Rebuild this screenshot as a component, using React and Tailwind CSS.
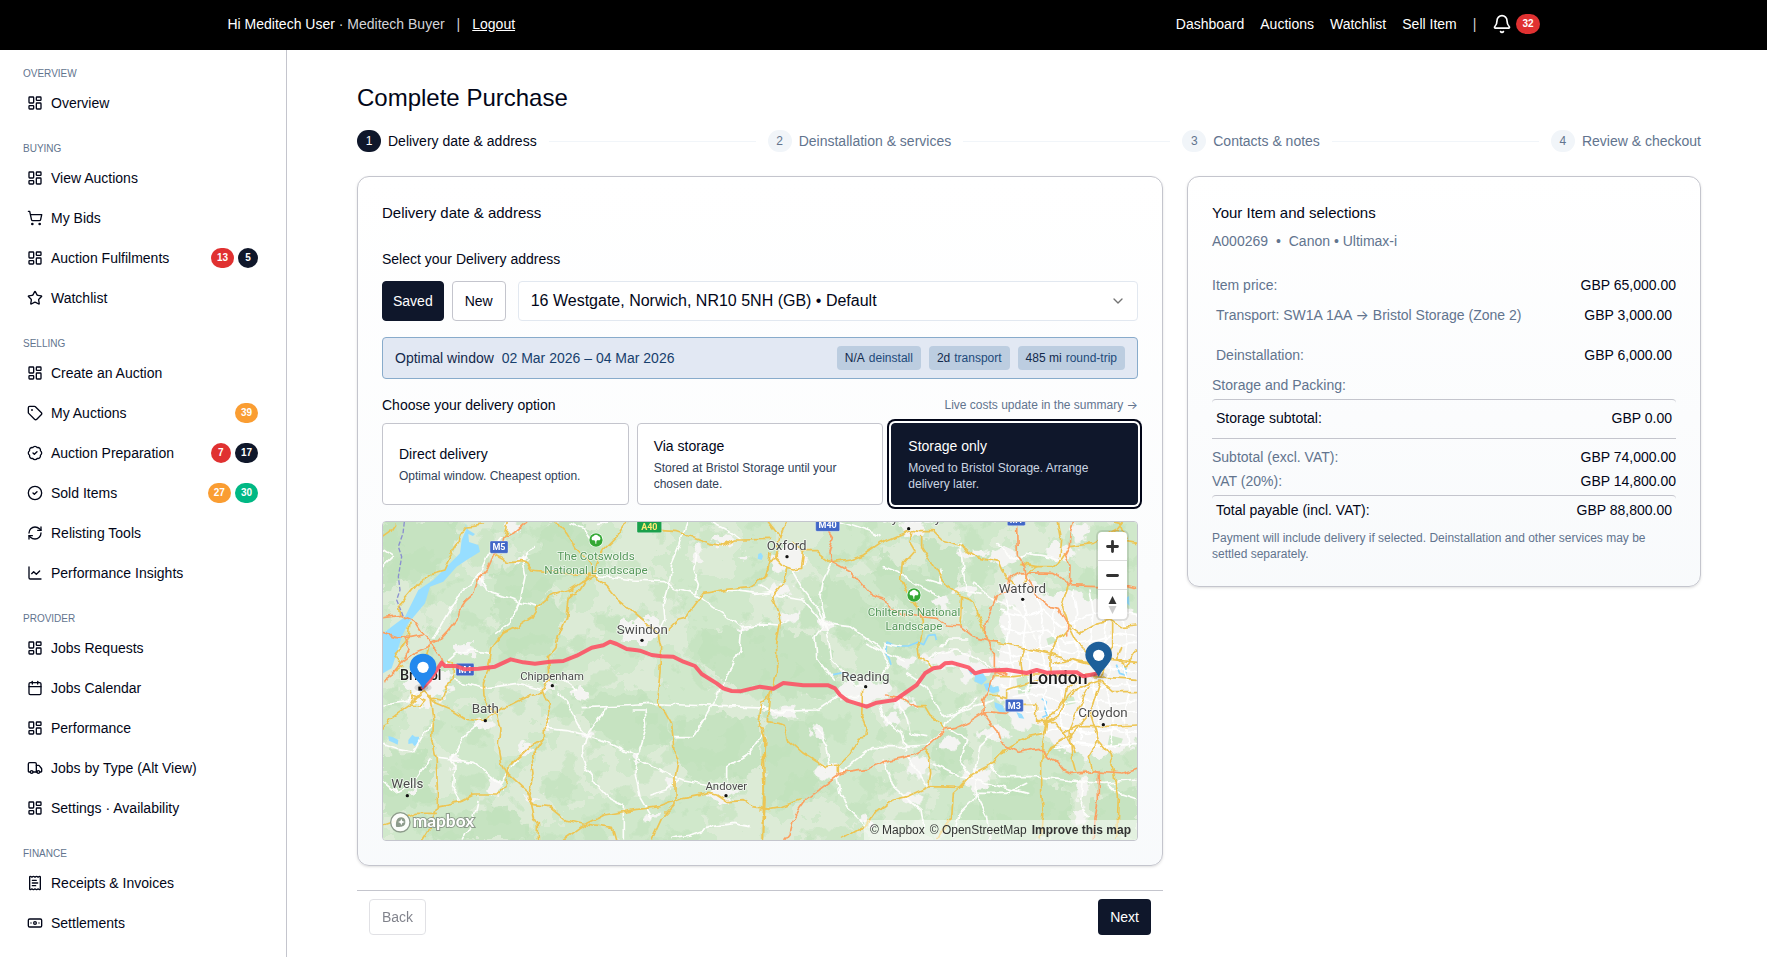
import React, { useState } from 'react';
import {
  BadgeCheck, Banknote, Bell, Calendar, ChartLine, ChevronDown, CircleCheck, LayoutDashboard,
  ReceiptText, RefreshCw, ShoppingCart, Star, Tag, Truck,
} from 'lucide-react';

const RED = 'bg-[#e03131]';
const DARK = 'bg-[#0f172a]';
const ORANGE = 'bg-[#fa9d32]';
const GREEN = 'bg-[#00b884]';

const sections = [
  { title: 'OVERVIEW', items: [{ label: 'Overview', icon: LayoutDashboard }] },
  {
    title: 'BUYING',
    items: [
      { label: 'View Auctions', icon: LayoutDashboard },
      { label: 'My Bids', icon: ShoppingCart },
      { label: 'Auction Fulfilments', icon: LayoutDashboard, badges: [[13, RED], [5, DARK]] },
      { label: 'Watchlist', icon: Star },
    ],
  },
  {
    title: 'SELLING',
    items: [
      { label: 'Create an Auction', icon: LayoutDashboard },
      { label: 'My Auctions', icon: Tag, badges: [[39, ORANGE]] },
      { label: 'Auction Preparation', icon: BadgeCheck, badges: [[7, RED], [17, DARK]] },
      { label: 'Sold Items', icon: CircleCheck, badges: [[27, ORANGE], [30, GREEN]] },
      { label: 'Relisting Tools', icon: RefreshCw },
      { label: 'Performance Insights', icon: ChartLine },
    ],
  },
  {
    title: 'PROVIDER',
    items: [
      { label: 'Jobs Requests', icon: LayoutDashboard },
      { label: 'Jobs Calendar', icon: Calendar },
      { label: 'Performance', icon: LayoutDashboard },
      { label: 'Jobs by Type (Alt View)', icon: Truck },
      { label: 'Settings · Availability', icon: LayoutDashboard },
    ],
  },
  {
    title: 'FINANCE',
    items: [
      { label: 'Receipts & Invoices', icon: ReceiptText },
      { label: 'Settlements', icon: Banknote },
    ],
  },
];

const steps = ['Delivery date & address', 'Deinstallation & services', 'Contacts & notes', 'Review & checkout'];

const options = [
  { id: 'direct', title: 'Direct delivery', text: 'Optimal window. Cheapest option.' },
  { id: 'via', title: 'Via storage', text: 'Stored at Bristol Storage until your chosen date.' },
  { id: 'storage', title: 'Storage only', text: 'Moved to Bristol Storage. Arrange delivery later.' },
];

const chips = [['N/A', 'deinstall'], ['2d', 'transport'], ['485 mi', 'round-trip']];

function Badge({ value, color }) {
  return (
    <span className={`flex h-5 min-w-5 items-center justify-center rounded-full px-1.5 text-[10px] font-bold text-white ${color}`}>
      {value}
    </span>
  );
}

function Arrow() {
  return <span className="font-['Inter',sans-serif]">→</span>;
}

function Header() {
  return (
    <header className="h-[50px] bg-black text-sm text-white">
      <div className="mx-auto flex h-12 max-w-[1312px] items-center justify-between">
        <div className="flex items-center">
          <span>Hi Meditech User</span>
          <span className="whitespace-pre text-zinc-300"> · Meditech Buyer</span>
          <span className="mx-3 text-zinc-300">|</span>
          <a href="#logout" className="underline">Logout</a>
        </div>
        <nav className="flex items-center gap-4">
          <a href="#dashboard">Dashboard</a>
          <a href="#auctions">Auctions</a>
          <a href="#watchlist">Watchlist</a>
          <a href="#sell">Sell Item</a>
          <span className="text-zinc-300">|</span>
          <a href="#notifications" aria-label="Notifications" className="flex items-center gap-1">
            <Bell className="h-5 w-5" />
            <Badge value={32} color={RED} />
          </a>
        </nav>
      </div>
    </header>
  );
}

function Sidebar() {
  return (
    <aside className="w-[287px] shrink-0 border-r border-[#c4c5cd] pt-3.5 pr-7 pl-[23px]">
      {sections.map((s, i) => (
        <div key={s.title} className={i > 0 ? 'mt-4' : ''}>
          <h2 className="text-[10px] leading-[19px] text-slate-500">{s.title}</h2>
          <ul>
            {s.items.map((it) => (
              <li key={it.label}>
                <a href="#nav" className="flex h-10 items-center gap-2 pl-1 text-sm">
                  <it.icon className="h-4 w-4" />
                  <span>{it.label}</span>
                  {it.badges && (
                    <span className="ml-auto flex gap-1">
                      {it.badges.map(([n, c]) => <Badge key={n} value={n} color={c} />)}
                    </span>
                  )}
                </a>
              </li>
            ))}
          </ul>
        </div>
      ))}
    </aside>
  );
}

function Stepper() {
  return (
    <ol className="mt-4 flex items-center text-sm">
      {steps.map((label, i) => (
        <li key={label} className="contents">
          <span
            className={`flex h-[22px] w-6 shrink-0 items-center justify-center rounded-full text-xs ${
              i === 0 ? 'bg-slate-900 text-white' : 'bg-slate-100 text-slate-500'
            }`}
          >
            {i + 1}
          </span>
          <span className={`ml-[7px] whitespace-nowrap leading-[22px] ${i === 0 ? '' : 'text-slate-500'}`}>{label}</span>
          {i < steps.length - 1 && <span className="mx-3 h-px flex-1 bg-slate-100" />}
        </li>
      ))}
    </ol>
  );
}

/* ---- map ---- */

const west = {
  orange: [
    '530,396 490,430 462,440 455,470 430,495 410,540 385,570 372,610 345,635 325,665 318,690 290,725 262,755 240,768 200,785 160,815 130,850 99,872',
    '99,683 150,676 200,700 222,735 245,760 270,800 280,825',
    '99,727 140,740 180,742 215,735',
    '160,740 178,775 165,805',
  ],
  yellow: [
    '99,440 120,425 137,400',
    '400,402 370,406 350,408 328,440 325,460 300,500 282,540 245,550 205,580 145,650 150,676',
    '475,396 468,430 462,440',
    '437,495 475,515 515,512 530,518 545,540 590,545 700,550 735,557',
    '615,396 650,430 680,480 720,520 735,557 775,590 800,622 845,660 880,690 925,735 932,770 930,850 920,930 945,965 965,1000 972,1080 985,1110 975,1160 975,1245 935,1285 905,1350',
    '828,396 800,440 760,480 740,520 735,557',
    '720,552 690,600 660,612 650,680 625,740 618,770 595,800 600,860 580,900 595,940 597,975 583,1010 583,1045 545,1100 552,1150 540,1200 535,1225 545,1245 553,1280 565,1300 565,1350',
    '735,557 690,580 660,600 600,620 560,655 545,680 500,710 460,730 425,775 420,810 400,880 402,920 440,975 450,1020 445,1060 455,1120 470,1150 530,1205 545,1243',
    '935,422 980,425 1040,445 1080,460 1120,468 1150,450 1170,450 1260,448',
    '955,720 985,690 1005,685 1030,650 1060,610 1130,598 1200,590 1245,560 1255,530 1260,490',
    '220,905 250,935 310,960 350,985 400,990 440,965 490,940 540,915 580,903',
    '240,920 250,1000 248,1050 258,1100 262,1190 262,1250 240,1310 215,1350',
    '99,1020 120,985 140,970 185,940 220,905',
    '262,1248 330,1235 370,1215 440,1215 465,1190 475,1130 540,1070 583,1045',
    '545,1243 600,1250 650,1290 710,1305 790,1315 800,1350',
    '640,1350 710,1300 760,1275 860,1258 930,1250 1000,1225 1080,1210 1100,1215 1130,1235 1180,1232 1210,1250 1260,1258',
    '1240,1350 1240,1250 1245,1150 1240,1020 1225,1010 1235,940 1260,920',
    '99,1305 160,1285 200,1270 262,1270',
    '245,925 275,930 290,890 310,870 310,820 290,815',
    '180,905 190,925 180,945 210,948 225,930 190,915',
    '180,700 175,740 150,780 135,800 150,820 140,845 160,830',
    '240,768 230,800 200,830',
  ],
  white: [
    '660,400 700,415 720,445 740,455',
    '1010,400 990,460 965,520 960,570 940,640 945,690 925,730',
    '735,557 850,570 940,575 970,595 1030,610 1060,630 1120,670 1170,710 1260,700',
    '1175,710 1170,780 1110,900 1090,940 1060,990 1030,1040 975,1040',
    '390,555 410,600 510,635 570,650',
    '550,470 515,512 525,560 510,635 480,700 440,730',
    '700,950 820,945 900,940 1000,945 1130,950 1260,955',
    '710,1035 780,1060 860,1100 950,1150 1000,1170 1080,1185 1130,1180 1130,1130 1200,1090 1240,1030',
    '710,1035 695,1100 710,1140 740,1185 780,1230 820,1250 820,1350',
    '583,1015 650,1022 710,1035 750,980 770,950',
    '860,1100 855,1150 870,1220 905,1280',
    '630,910 660,960 680,1000 710,1035',
    '99,945 170,935 200,905 230,890',
    '280,825 320,790 360,780 420,790',
    '310,870 400,895 500,880 580,900',
    '395,1000 350,1030 330,1060 300,1110 315,1130 310,1200 330,1235',
    '99,1060 140,1075 190,1085 220,1030 250,1000',
    '265,1105 300,1110 370,1120 450,1180 520,1085',
    '1040,490 1030,545 1045,580 1040,610',
    '850,960 885,960 890,1010 875,1060 860,1100',
    '455,440 415,490 385,560 330,610 290,680 250,750',
    '99,480 130,500 99,530',
    '740,400 780,396',
    '1170,450 1130,420 1090,400',
    '1130,600 1180,605 1220,610 1260,605',
    '680,900 640,870 600,850',
    '960,1345 1020,1335 1090,1310 1150,1300 1200,1310',
    '340,1350 370,1290 385,1230',
    '99,1170 140,1205 190,1180 240,1110',
    '985,1170 950,1200 900,1215',
  ],
};

const east = {
  orange: [
    '200,80 220,110 207,160 213,185 270,215 300,250 330,285 375,300 385,325 400,330 440,345 530,355 560,375 600,378 640,410 690,425 715,425',
    '670,640 668,600 690,560 703,520 703,460 675,410 680,360 690,340 710,285 745,270 750,235 780,218 880,220 905,235 925,257 1010,260 1060,252 1131,266',
    '770,80 772,165 795,200 800,240 830,285 870,320 895,325 920,370 920,405',
    '940,66 930,100 928,140 915,165 930,200 928,257',
    '670,640 710,690 720,730 775,757 840,745 860,770 890,785 910,810 930,820 1000,815 1090,822 1131,808',
    '740,640 680,635 640,660 590,685 555,690 495,745 460,765 370,785 320,808 240,820 200,850 140,895 115,930 100,960 90,1000 75,1018',
    '1000,812 1015,820 1015,900 1005,960 1000,1018',
    '380,585 430,595 455,612 475,620',
    '703,515 740,518 740,525 703,520',
  ],
  yellow: [
    '220,188 270,180 310,165 360,130 430,100 450,90 480,95 520,95 545,120 600,135 650,170 715,185 725,210 745,240 760,250',
    '455,95 450,125 465,150 430,190 425,240 440,275 470,320 490,360 488,400 470,440 475,470 520,500',
    '485,110 485,140 530,210 560,255 605,290 640,305 665,370 680,420 800,445 880,465 930,480 1000,500',
    '100,125 130,155 170,155 213,188',
    '45,170 80,205 100,210 125,205 130,155',
    '80,205 75,240 35,290 50,330 62,365 50,430 50,520 30,600 25,665 75,675 85,720 130,760 195,800 235,795 235,820',
    '235,795 270,760 295,715 315,710 318,680 305,650 308,570',
    '0,240 20,225 25,195 45,170 60,110 25,66',
    '60,110 80,66',
    '0,685 15,720 8,800 15,900 10,1018',
    '0,930 60,920 118,900',
    '245,1018 320,975 340,945 400,900 440,890 505,860 600,862 640,820 700,790 740,745 800,710 850,700 860,660 910,600 940,570 1000,545',
    '505,860 512,820 508,770 495,745',
    '475,620 495,620 510,645 545,670 552,690',
    '530,1018 575,950 580,880 600,862',
    '605,290 600,375',
    '690,580 740,595 740,570 800,550 840,535',
    '705,530 760,530 800,525 900,525 1000,530 1131,538',
    '790,445 780,490 785,530',
    '780,190 830,200 880,200 905,180 915,165',
    '930,140 1000,130 1070,90 1090,66',
    '1131,130 1100,125 1080,70 1060,66',
    '830,200 800,220 795,250',
    '895,66 905,120 900,170',
    '925,257 905,320 925,380 945,420 975,450 1000,500',
    '920,370 960,400 1010,370 1050,360 1080,380 1131,375',
    '870,520 870,470 885,430 925,385',
    '880,490 930,480 980,490 1040,480 1131,490',
    '1020,530 1040,470 1055,440 1055,370',
    '1085,440 1070,480 1100,500 1131,450',
    '1020,545 1005,590 990,640 1015,720 1050,760 1060,815 1075,890 1070,1018',
    '990,560 960,620 930,690 935,760 950,815',
    '830,610 830,665 880,665 930,720 945,760',
    '860,670 850,720 845,790 845,880 850,930 840,1018',
    '910,700 950,680 1020,680 1131,675',
    '930,590 960,560 1020,540 1060,575 1131,575',
    '780,610 830,610',
    '1015,720 985,770 995,812',
    '860,670 900,640 915,570 950,545',
    '850,775 870,740 940,700 990,640',
  ],
  white: [
    '0,255 60,290 130,300 190,370 270,380 340,430 380,460 430,480',
    '95,210 130,270 170,320 195,370 205,410 215,480 270,540 310,560',
    '0,370 60,375 90,360',
    '240,66 340,100 360,110',
    '370,200 420,220 500,270 540,290',
    '505,240 540,250 540,210',
    '600,130 610,215 620,270 660,280',
    '0,620 50,635 170,630 230,590 300,590',
    '170,680 200,740 210,800',
    '230,825 240,880 270,930 320,980',
    '240,820 340,740 420,740 500,735 555,690 570,650 650,600',
    '360,620 380,670 430,700 440,750',
    '410,600 440,650 450,700 500,710',
    '320,430 370,460 390,500 350,540',
    '375,455 375,430 420,440',
    '440,520 500,560 530,610 550,650 610,630 700,600',
    '370,780 400,860 440,895 480,930 490,990',
    '520,790 600,830 650,840 720,860 800,880',
    '640,830 660,740 700,700',
    '650,840 640,900 600,940 580,1018',
    '645,880 680,950 690,1018',
    '440,765 470,810 505,860',
    '570,690 620,720 600,790 640,830',
    '690,790 720,830 830,830 950,845 1030,850 1131,840',
    '970,840 960,920 990,950',
    '800,850 740,880 640,880',
    '1040,850 1070,880 1131,900',
    '700,510 660,480 590,450 530,460 500,480',
    '620,420 560,420 540,440',
    '710,130 760,180 800,160 870,170 905,180',
    '640,250 700,300 760,320 800,360 830,420',
    '195,370 165,410 170,470 220,540',
    '213,188 190,240 180,290 195,360',
  ],
};

// dense street grid of greater London
const streets = [
  '720,330 790,350 850,330 905,380 980,350 1060,330 1131,345',
  '720,380 780,400 860,390 920,430 1000,420 1080,400 1131,410',
  '720,450 770,470 860,440 940,460 1010,440 1131,430',
  '720,490 800,480 880,500 960,490 1040,500 1131,515',
  '720,560 790,570 870,555 940,570 1040,560 1131,555',
  '760,590 840,580 900,610 980,600 1060,610 1131,600',
  '800,640 880,630 950,650 1040,640 1131,635',
  '840,700 900,680 980,700 1060,690 1131,700',
  '880,740 960,730 1050,740 1131,730',
  '740,300 750,360 740,430 760,500 750,580',
  '780,270 800,340 790,420 810,490 800,580 820,620',
  '830,290 850,360 840,440 860,500 850,590 870,660',
  '880,330 885,400 900,460 895,540 910,600 900,690',
  '940,270 950,340 940,410 960,470 950,540 970,620 960,720',
  '990,270 1000,340 990,420 1010,480 1000,560 1020,640 1010,720',
  '1040,360 1030,430 1050,500 1040,580 1060,650 1050,740',
  '1090,360 1100,430 1090,500 1110,570 1090,650 1110,740',
];

const greens = [
  '600,396 720,396 740,540 640,560 560,640 440,710 430,560 560,480',
  '430,720 600,610 640,680 600,800 470,790 420,760',
  '99,1090 230,1090 250,1230 99,1280',
  '700,930 860,900 940,950 960,1060 820,1080 720,1010',
  '960,990 1230,970 1230,1150 1020,1180 970,1080',
  '1050,720 1290,700 1290,900 1160,900 1060,820',
  '260,1280 480,1250 560,1350 230,1350',
  '99,396 330,396 300,500 200,570 99,600',
  '1240,930 1300,980 1420,1010 1390,1220 1240,1250',
];

const eastGreens = [
  '200,220 330,300 420,340 520,390 460,450 380,440 230,400 190,330',
  '360,150 420,200 600,250 530,350 440,320 340,260',
  '470,110 600,150 600,260 520,240',
  '0,400 180,400 230,520 220,590 20,590',
  '30,690 180,780 200,810 80,850 20,850',
  '650,850 840,830 930,880 930,1010 660,1018',
  '520,690 600,680 640,760 600,830 520,800',
  '990,900 1131,860 1131,1018 1020,1018',
];

// [x, y, rx, ry]
const westTowns = [
  [235, 880, 68, 52], [210, 930, 38, 24], [400, 1000, 26, 18], [870, 722, 62, 38], [350, 780, 38, 16],
  [600, 885, 22, 12], [690, 910, 20, 20], [712, 1030, 20, 12], [530, 1075, 18, 18], [312, 1115, 26, 14],
  [440, 1188, 20, 18], [515, 512, 22, 12], [485, 410, 22, 20], [1125, 455, 32, 16], [1042, 490, 18, 18],
  [1175, 712, 18, 8], [1120, 1215, 42, 20], [860, 1105, 12, 10], [905, 1280, 20, 12], [960, 1180, 12, 14],
  [545, 1225, 26, 10], [398, 570, 14, 16], [590, 1010, 14, 16], [195, 1190, 12, 10], [1180, 510, 18, 8],
];

const eastTowns = [
  [85, 175, 52, 42], [60, 270, 38, 18], [85, 355, 28, 18], [310, 570, 76, 36], [60, 635, 50, 12],
  [460, 85, 36, 26], [170, 690, 20, 16], [210, 815, 42, 22], [635, 165, 42, 14], [620, 270, 28, 18],
  [540, 305, 24, 18], [730, 170, 40, 26], [780, 270, 62, 46], [900, 160, 40, 24], [960, 100, 26, 30],
  [560, 480, 80, 22], [640, 510, 46, 26], [440, 490, 26, 18], [480, 800, 26, 32], [450, 895, 30, 16],
  [650, 840, 40, 30], [570, 730, 30, 20], [700, 700, 44, 20], [430, 610, 40, 18], [970, 860, 26, 30],
  [1000, 600, 180, 170], [870, 500, 170, 140], [900, 380, 180, 100], [1060, 420, 110, 110], [760, 560, 60, 60],
  [960, 950, 18, 26], [190, 370, 16, 18], [320, 965, 18, 12], [810, 650, 60, 40], [395, 655, 30, 16],
];

// [label, x, y, size, fill, dot]
const labels = [
  ['The Cotswolds', 639, 113, 35, '#56985a'],
  ['National Landscape', 639, 157, 35, '#56985a'],
  ['Swindon', 778, 336, 40, '#4b4b4b', [777, 355]],
  ['Chippenham', 507, 474, 34, '#4b4b4b', [508, 491]],
  ['Bath', 307, 574, 40, '#4b4b4b', [307, 596]],
  ['Wells', 73, 799, 40, '#4b4b4b', [73, 821]],
  ['Andover', 1030, 804, 34, '#4b4b4b', [1029, 821]],
  ['Oxford', 1211, 84, 40, '#4b4b4b', [1212, 104]],
  ['Aylesbury', 1588, -1, 40, '#4b4b4b', [1577, 20]],
  ['Watford', 1918, 212, 40, '#4b4b4b', [1919, 232]],
  ['Reading', 1447, 476, 40, '#4b4b4b', [1448, 494]],
  ['Croydon', 2160, 586, 40, '#4b4b4b', [2161, 608]],
  ['Chilterns National', 1593, 281, 35, '#56985a'],
  ['Landscape', 1593, 325, 35, '#56985a'],
];

// [label, x, y, width, fill, text fill]
const shields = [
  ['M5', 321, 57, 54, '#4167c7', '#fff'],
  ['A40', 762, -5, 74, '#1aa04b', '#ffe873'],
  ['M4', 219, 424, 54, '#4167c7', '#fff'],
  ['M40', 1298, -9, 72, '#4167c7', '#fff'],
  ['M1', 1873, -26, 54, '#4167c7', '#fff'],
  ['M3', 1867, 532, 54, '#4167c7', '#fff'],
];

const Lines = ({ list, stroke, width }) => (
  <g fill="none" stroke={stroke} strokeWidth={width} strokeLinejoin="round" strokeLinecap="round">
    {list.map((p) => <polyline key={p} points={p} />)}
  </g>
);

const Towns = ({ list }) => list.map(([x, y, rx, ry]) => <ellipse key={`${x}-${y}`} cx={x} cy={y} rx={rx} ry={ry} />);

const Pin = ({ x, y, fill }) => (
  <g transform={`translate(${x} ${y})`}>
    <ellipse cx="0" cy="-4" rx="26" ry="12" fill="#000" opacity="0.1" />
    <ellipse cx="0" cy="-4" rx="16" ry="7" fill="#000" opacity="0.14" />
    <path d="M0 0C-10-24-40-42-40-66A40 40 0 0 1 40-66C40-42 10-24 0 0Z" fill={fill} />
    <circle cx="0" cy="-65" r="17" fill="#fff" />
  </g>
);

const Park = ({ x, y }) => (
  <g transform={`translate(${x} ${y})`}>
    <circle r="22" fill="#fff" />
    <circle r="20" fill="#35a835" />
    <path d="M-11 1a7 7 0 0 1 3-12 9 9 0 0 1 16 0 7 7 0 0 1 3 12h-8l-2 4v6h-3V5l-3-4z" fill="#fff" />
  </g>
);

function RouteMap() {
  return (
    <svg
      viewBox="0 0 2262 954"
      preserveAspectRatio="xMidYMid slice"
      role="img"
      aria-label="Route map"
      className="h-full w-full font-['Roboto',sans-serif]"
    >
      <defs>
        <filter id="wood" x="0" y="0" width="100%" height="100%" colorInterpolationFilters="sRGB">
          <feTurbulence type="fractalNoise" baseFrequency="0.012" numOctaves="4" seed="11" />
          <feColorMatrix values="0 0 0 0 0.74  0 0 0 0 0.88  0 0 0 0 0.72  9 0 0 0 -4.9" />
          <feComponentTransfer><feFuncA type="discrete" tableValues="0 0.28 0.5" /></feComponentTransfer>
        </filter>
        <filter id="field" x="0" y="0" width="100%" height="100%" colorInterpolationFilters="sRGB">
          <feTurbulence type="fractalNoise" baseFrequency="0.006" numOctaves="5" seed="4" />
          <feColorMatrix values="0 0 0 0 0.865  0 0 0 0 0.92  0 0 0 0 0.845  0 9 0 0 -4.1" />
          <feComponentTransfer><feFuncA type="discrete" tableValues="0 0.9" /></feComponentTransfer>
        </filter>
        <filter id="rough" x="-5%" y="-5%" width="110%" height="110%">
          <feTurbulence type="fractalNoise" baseFrequency="0.03" numOctaves="3" seed="7" />
          <feDisplacementMap in="SourceGraphic" scale="60" xChannelSelector="R" yChannelSelector="G" />
        </filter>
        <filter id="wobble" x="-5%" y="-5%" width="110%" height="110%">
          <feTurbulence type="fractalNoise" baseFrequency="0.03" numOctaves="2" seed="3" />
          <feDisplacementMap in="SourceGraphic" scale="20" xChannelSelector="R" yChannelSelector="G" />
        </filter>
      </defs>

      <rect width="2262" height="954" fill="#d0e8cb" />
      <rect width="2262" height="954" filter="url(#field)" />
      <g fill="#c6e3c1" filter="url(#rough)">
        <g transform="translate(-99 -396)">{greens.map((p) => <polygon key={p} points={p} />)}</g>
        <g transform="translate(1131 -66)">{eastGreens.map((p) => <polygon key={p} points={p} />)}</g>
      </g>
      <rect width="2262" height="954" filter="url(#wood)" />
      <g fill="#f4f4f2" filter="url(#rough)">
        <g transform="translate(-99 -396)"><Towns list={westTowns} /></g>
        <g transform="translate(1131 -66)"><Towns list={eastTowns} /></g>
      </g>
      <g fill="#cfe8ca">
        <path d="M1900 470l30-10 20 20-10 30-34 6zM2046 520l26 4 6 20-30 6zM1990 350l26-10 10 16-30 14zM2180 640l40 10-10 26-36-8zM1850 350l20-6 6 16-22 8z" />
      </g>

      {/* water */}
      <g fill="#97deff">
        <path d="M0 334L66 284 106 204 151 174 191 134 231 94 236 54 250 22 246 4 256 24 276 36 270 42 256 36 258 60 286 69 291 89 251 114 221 134 181 179 141 194 126 244 76 304 56 344 41 394 26 439 0 454Z" />
        <path d="M16 642l14 4 16 8-2 14-12-6-14-6zM76 654l12-16 8 6 12 0 0 22-14 6-6-8-12 2zM1126 96l8-4 6 10-4 12-12-4z" />
        <path d="M1776 460l24-6 12 18-16 16-22-10zM1802 486l18-4 10 14 16-4 4 16-20 6-20-8zM1834 540l24 10 10 22-14 4-18-20zM1900 570l16 6 8 14-16-2zM2218 430l12 4 2 20-8 4zM2232 226l6-4 2 30-8-8z" />
        <path d="M1756 444l16-4 4 10-12 8z" />
      </g>
      <g fill="none" stroke="#8ed9ff" strokeWidth="5" strokeLinejoin="round">
        <path d="M1508 392l4-32 24 12 40 0 30-12 16 8 14-28 20-2 4 16M1524 428l-6-20-10-14M1976 530l14 10-4 20 6 20-14 6M1350 458l30-6 30 14M2200 428l10 26 20 6" />
      </g>
      <polyline points="64,0 60,34 46,74 56,104 46,164 51,204 41,234 61,284" fill="none" stroke="#8a8fd0" strokeWidth="4" strokeDasharray="14 6" />

      <g filter="url(#wobble)">
        <g transform="translate(-99 -396)">
          <Lines list={west.white} stroke="#fdfdfb" width="5" />
        </g>
        <g transform="translate(1131 -66)">
          <Lines list={east.white} stroke="#fdfdfb" width="5" />
          <Lines list={streets} stroke="#fff" width="5" />
        </g>
        <g transform="translate(-99 -396)">
          <Lines list={west.yellow} stroke="#edc552" width="5" />
          <Lines list={west.orange} stroke="#fba162" width="5" />
        </g>
        <g transform="translate(1131 -66)">
          <Lines list={east.yellow} stroke="#edc552" width="5" />
          <Lines list={east.orange} stroke="#fba162" width="5" />
        </g>
      </g>

      <Park x={639} y={54} />
      <Park x={1593} y={219} />

      <g textAnchor="middle" stroke="#fff" strokeWidth="5" strokeOpacity="0.7" strokeLinejoin="round" paintOrder="stroke">
        {labels.map(([t, x, y, size, fill]) => (
          <text key={t} x={x} y={y} fontSize={size} fill={fill}>{t}</text>
        ))}
        <text x="113" y="475" fontSize="43" fill="#222" fontWeight="500">Bristol</text>
        <text x="2025" y="485" fontSize="53" fill="#1c1c1c" fontWeight="500">London</text>
      </g>
      {labels.filter((l) => l[5]).map(([t, , , , , dot]) => <circle key={t} cx={dot[0]} cy={dot[1]} r="5" fill="#111" />)}
      <rect x="106" y="494" width="12" height="12" fill="#111" />

      {shields.map(([t, x, y, w, fill, color]) => (
        <g key={t}>
          <rect x={x} y={y} width={w} height="37" rx="4" fill={fill} stroke="#fff" strokeOpacity="0.5" strokeWidth="2" />
          <text x={x + w / 2} y={y + 28} fontSize="27" fontWeight="700" fill={color} textAnchor="middle">{t}</text>
        </g>
      ))}

      <polyline
        points="119,497 141,474 176,422 186,432 219,432 246,442 286,440 336,434 383,412 421,421 456,425 501,419 541,417 581,401 626,377 661,370 681,359 701,366 731,381 771,386 806,399 836,403 871,404 901,419 936,432 956,456 1001,484 1021,499 1046,507 1071,508 1131,494 1171,500 1201,483 1261,490 1336,490 1356,499 1371,519 1393,536 1451,554 1481,542 1536,534 1601,489 1626,454 1651,439 1671,436 1686,424 1706,422 1756,436 1776,454 1801,447 1871,443 1931,453 1961,444 1991,452 2031,451 2081,451 2101,463 2146,454"
        fill="none"
        stroke="#fb5566"
        strokeOpacity="0.92"
        strokeWidth="12"
        strokeLinejoin="round"
        strokeLinecap="round"
      />
      <Pin x={120} y={501} fill="#2489ee" />
      <Pin x={2147} y={465} fill="#1e5f9a" />

      {/* mapbox wordmark */}
      <g transform="translate(52 901)">
        <circle r="29" fill="#fff" fillOpacity="0.9" stroke="#8d9b8b" strokeWidth="4" />
        <path d="M-13 13C-14 0-12-15 3-15A14 14 0 0 1 15 0C15 14 0 15-13 13Z" fill="#8d9b8b" />
        <path d="M3-11L6-4 13-1 6 2 3 9 0 2-7-1 0-4Z" fill="#fff" />
        <text x="37" y="14" fontSize="52" fontWeight="700" fill="#fff" stroke="#8d9b8b" strokeWidth="6" paintOrder="stroke" fontFamily="Lato, sans-serif">mapbox</text>
      </g>
    </svg>
  );
}

function MapPanel() {
  return (
    <div className="relative mt-4 h-80 overflow-hidden rounded border border-[#c4c5cd]">
      <RouteMap />
      <div className="absolute top-2.5 right-2.5 w-[29px] divide-y divide-[#ddd] rounded bg-white ring-2 ring-black/10">
        <button aria-label="Zoom in" className="flex h-[29px] w-full items-center justify-center">
          <svg viewBox="0 0 29 29" className="h-[29px] w-[29px]"><path d="M14.5 9.5v10M9.5 14.5h10" stroke="#333" strokeWidth="2.8" strokeLinecap="round" /></svg>
        </button>
        <button aria-label="Zoom out" className="flex h-[29px] w-full items-center justify-center">
          <svg viewBox="0 0 29 29" className="h-[29px] w-[29px]"><path d="M9.5 14.5h10" stroke="#333" strokeWidth="2.8" strokeLinecap="round" /></svg>
        </button>
        <button aria-label="Reset bearing to north" className="flex h-[29px] w-full items-center justify-center">
          <svg viewBox="0 0 29 29" className="h-[29px] w-[29px]">
            <path d="M10.5 14l4-8 4 8z" fill="#333" />
            <path d="M10.5 16l4 8 4-8z" fill="#ccc" />
          </svg>
        </button>
      </div>
      <div className="absolute right-0 bottom-0 flex h-5 items-center gap-[5px] bg-white/50 px-1.5 text-xs text-[#333]">
        <a href="#mapbox">© Mapbox</a>
        <a href="#osm">© OpenStreetMap</a>
        <a href="#improve" className="font-bold">Improve this map</a>
      </div>
    </div>
  );
}

function DeliveryCard() {
  const [mode, setMode] = useState('saved');
  const [option, setOption] = useState('storage');

  return (
    <section className="rounded-xl border border-[#c4c5cd] bg-linear-to-b from-white to-slate-50 p-6 shadow-sm">
      <h2 className="text-[15px] leading-6">Delivery date &amp; address</h2>

      <label htmlFor="address" className="mt-6 block text-sm">Select your Delivery address</label>
      <div className="mt-3 flex">
        <button
          onClick={() => setMode('saved')}
          className={`h-10 rounded border px-2.5 text-sm ${mode === 'saved' ? 'border-slate-900 bg-slate-900 text-white' : 'border-[#c4c5cd] bg-white'}`}
        >
          Saved
        </button>
        <button
          onClick={() => setMode('new')}
          className={`ml-2 h-10 rounded border px-3 text-sm ${mode === 'new' ? 'border-slate-900 bg-slate-900 text-white' : 'border-[#c4c5cd] bg-white'}`}
        >
          New
        </button>
        <div className="relative ml-3 flex-1">
          <select id="address" className="h-10 w-full appearance-none rounded border border-slate-200 bg-white px-3 text-base">
            <option>16 Westgate, Norwich, NR10 5NH (GB) • Default</option>
          </select>
          <ChevronDown className="pointer-events-none absolute top-3 right-3 h-4 w-4 text-neutral-500" />
        </div>
      </div>

      <div className="mt-4 flex h-[42px] items-center justify-between rounded border border-[#88abcb] bg-[#e2e8f3] px-3 text-sm">
        <p className="text-[#12294b]">
          Optimal window <span className="ml-1 text-[#173f6d]">02 Mar 2026 – 04 Mar 2026</span>
        </p>
        <ul className="flex gap-2 text-xs">
          {chips.map(([value, label]) => (
            <li key={label} className="flex gap-1 rounded bg-[#bccde0] px-2 py-1 text-[#1c4a7a]">
              <span className="text-[#12294b]">{value}</span>
              <span>{label}</span>
            </li>
          ))}
        </ul>
      </div>

      <div className="mt-4 flex items-center justify-between">
        <h3 className="text-sm">Choose your delivery option</h3>
        <span className="text-xs text-slate-500">Live costs update in the summary <Arrow /></span>
      </div>
      <div className="mt-2 grid grid-cols-3 gap-2">
        {options.map((o) => (
          <button
            key={o.id}
            onClick={() => setOption(o.id)}
            className={`flex h-[82px] flex-col justify-center rounded border px-4 text-left ${
              option === o.id
                ? 'border-slate-900 bg-slate-900 text-white ring-2 ring-slate-950 ring-offset-2'
                : 'border-[#c4c5cd] bg-white'
            }`}
          >
            <span className="text-sm">{o.title}</span>
            <span className={`mt-1 text-xs ${option === o.id ? 'text-slate-300' : 'text-slate-700'}`}>{o.text}</span>
          </button>
        ))}
      </div>

      <MapPanel />
    </section>
  );
}

function Row({ label, value, className = '', labelClass = 'text-slate-500' }) {
  return (
    <div className={`flex justify-between ${className}`}>
      <dt className={labelClass}>{label}</dt>
      <dd>{value}</dd>
    </div>
  );
}

function Summary() {
  return (
    <section className="rounded-xl border border-[#c4c5cd] bg-linear-to-b from-white to-slate-50 p-6 text-sm shadow-sm">
      <h2 className="text-[15px] leading-6">Your Item and selections</h2>
      <p className="mt-1.5 text-slate-500">
        A000269 <span className="mx-1">•</span> Canon • Ultimax-i
      </p>
      <dl className="mt-6">
        <Row label="Item price:" value="GBP 65,000.00" />
        <Row label={<>Transport: SW1A 1AA <Arrow /> Bristol Storage (Zone 2)</>} value="GBP 3,000.00" className="mt-2.5 px-1" />
        <Row label="Deinstallation:" value="GBP 6,000.00" className="mt-5 px-1" />
        <Row label="Storage and Packing:" className="mt-2.5" />
        <Row label="Storage subtotal:" value="GBP 0.00" className="mt-1 rounded border-t border-[#c4c5cd] px-1 py-2" labelClass="" />
        <Row label="Subtotal (excl. VAT):" value="GBP 74,000.00" className="mt-0.5 border-t border-[#c4c5cd] pt-2" />
        <Row label="VAT (20%):" value="GBP 14,800.00" className="mt-1" />
        <Row label="Total payable (incl. VAT):" value="GBP 88,800.00" className="mt-1 rounded border-t border-[#c4c5cd] p-1" labelClass="" />
      </dl>
      <p className="mt-1.5 text-xs text-slate-500">
        Payment will include delivery if selected. Deinstallation and other services may be settled separately.
      </p>
    </section>
  );
}

export default function App() {
  return (
    <div className="flex min-h-screen flex-col bg-white font-['Liberation_Sans',Arial,sans-serif] text-slate-950">
      <Header />
      <div className="flex flex-1">
        <Sidebar />
        <main className="min-w-0 flex-1 pt-8 pr-[66px] pl-[70px]">
          <h1 className="text-2xl">Complete Purchase</h1>
          <Stepper />
          <div className="mt-6 grid grid-cols-[403fr_257fr] items-start gap-6">
            <div>
              <DeliveryCard />
              <div className="mt-6 flex justify-between border-t border-[#c4c5cd] px-3 pt-2 text-sm">
                <button disabled className="h-9 rounded border border-[#c4c5cd] bg-white px-3 opacity-50">Back</button>
                <button className="h-9 rounded bg-slate-900 px-3 text-white">Next</button>
              </div>
            </div>
            <Summary />
          </div>
        </main>
      </div>
    </div>
  );
}
